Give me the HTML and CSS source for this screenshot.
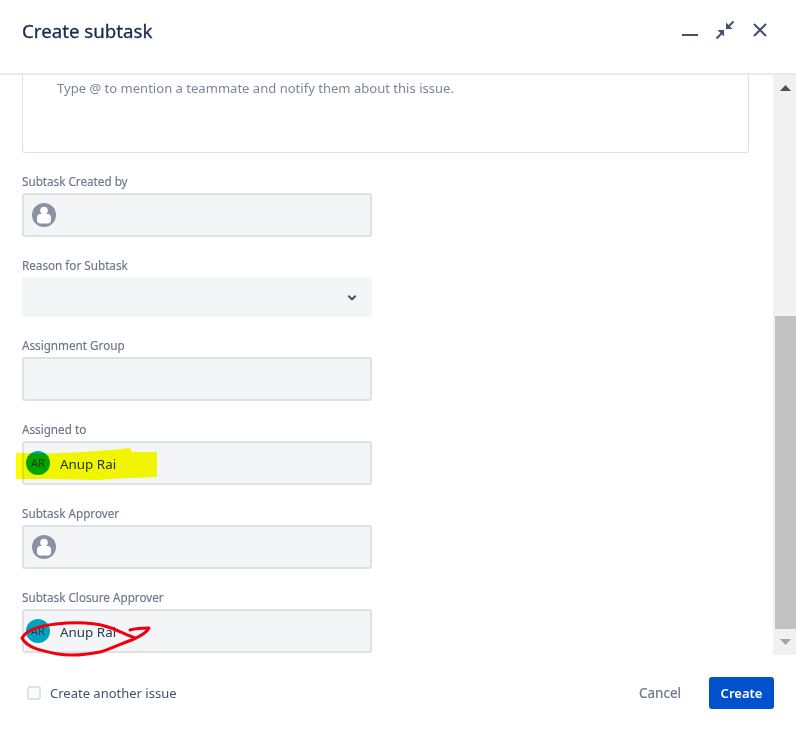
FILE: index.html
```html
<!DOCTYPE html>
<html lang="en">
<head>
<meta charset="utf-8">
<title>Create subtask</title>
<link rel="stylesheet" href="styles.css">
</head>
<body>
<div class="dialog">
  <header class="head">
    <h1 class="title">Create subtask</h1>
    <div class="head-icons">
      <svg class="hicon" width="24" height="24" viewBox="0 0 24 24"><rect x="3" y="16" width="16" height="2" fill="#42526e"/></svg>
      <svg class="hicon" width="24" height="24" viewBox="0 0 24 24"><path d="M4.500 20.500L10 15M15.500 9.500L21.500 3.500" fill="none" stroke="#42526e" stroke-width="2"/><path d="M12 12v6.500L5.500 12zM14 11V4.500L20.500 11z" fill="#42526e"/></svg>
      <svg class="hicon" width="24" height="24" viewBox="0 0 24 24"><path d="M9 6l12 12M21 6L9 18" fill="none" stroke="#42526e" stroke-width="2"/></svg>
    </div>
  </header>
  <div class="middle">
    <main class="body">
      <div class="editor">Type @ to mention a teammate and notify them about this issue.</div>
      <div class="field">
        <div class="label">Subtask Created by</div>
        <div class="box">
          <svg class="avatar" width="24" height="24" viewBox="0 0 24 24"><circle cx="12" cy="12" r="12" fill="#8993a4"/><circle cx="12" cy="7.500" r="3.800" fill="#fff"/><path d="M5 14.500a3.500 3.500 0 0 1 3.500-3.500h7a3.500 3.500 0 0 1 3.500 3.500V17a3.500 3.500 0 0 1-3.500 3.500h-7A3.500 3.500 0 0 1 5 17z" fill="#fff"/></svg>
        </div>
      </div>
      <div class="field">
        <div class="label">Reason for Subtask</div>
        <div class="select">
          <svg width="24" height="24" viewBox="0 0 24 24"><path d="M8.300 10.800L12 14.300l3.700-3.500" fill="none" stroke="#42526e" stroke-width="2"/></svg>
        </div>
      </div>
      <div class="field">
        <div class="label">Assignment Group</div>
        <div class="box"></div>
      </div>
      <div class="field">
        <div class="label">Assigned to</div>
        <div class="box">
          <span class="initials">AR</span><span class="name">Anup Rai</span>
        </div>
      </div>
      <div class="field">
        <div class="label">Subtask Approver</div>
        <div class="box">
          <svg class="avatar" width="24" height="24" viewBox="0 0 24 24"><circle cx="12" cy="12" r="12" fill="#8993a4"/><circle cx="12" cy="7.500" r="3.800" fill="#fff"/><path d="M5 14.500a3.500 3.500 0 0 1 3.500-3.500h7a3.500 3.500 0 0 1 3.500 3.500V17a3.500 3.500 0 0 1-3.500 3.500h-7A3.500 3.500 0 0 1 5 17z" fill="#fff"/></svg>
        </div>
      </div>
      <div class="field">
        <div class="label">Subtask Closure Approver</div>
        <div class="box">
          <span class="initials">AR</span><span class="name">Anup Rai</span>
        </div>
      </div>
    </main>
    <div class="scrollbar">
      <svg class="arrow" width="23" height="17" viewBox="0 0 23 17"><path d="M7 16h11L12.500 10z" fill="#505050"/></svg>
      <div class="track"><div class="thumb"></div></div>
      <svg class="arrow" width="23" height="26" viewBox="0 0 23 26"><path d="M7 10h11l-5.500 6z" fill="#a3a3a3"/></svg>
    </div>
  </div>
  <footer class="foot">
    <label class="check"><span class="checkbox"></span>Create another issue</label>
    <div class="actions">
      <span class="cancel">Cancel</span>
      <span class="create">Create</span>
    </div>
  </footer>
  <svg class="marks" width="796" height="730" viewBox="0 0 796 730">
    <path class="yellow" d="M16 453L50 453.500L83 452L110 450L130 448L132 452L157 452L157 477L128 478L97 480L50 479L16 479z"/>
    <path class="red" d="M130 630C137 628 143 628 149 628C146 634 138 637 132 640C120 644 110 649 100 652C85 655 70 656 58 654C42 651 27 648 22 638C26 631 38 626 56 624C75 622 95 623 108 627C117 630 125 634 135 638"/>
  </svg>
</div>
</body>
</html>
```
FILE: styles.css
```css
* { box-sizing: border-box; }
html, body { margin: 0; padding: 0; background: #fff; }
body { font-family: "Noto Sans", "Open Sans", sans-serif; color: #172b4d; }
.dialog { position: relative; width: 796px; height: 730px; overflow: hidden; display: flex; flex-direction: column; }
.head { height: 75px; flex: none; padding: 0 27px 0 22px; display: flex; align-items: center; justify-content: space-between; border-bottom: 2px solid #e9eaee; }
.title { margin: 0 0 12px; font-size: 18.700px; line-height: 28px; font-weight: 400; color: #172b4d; -webkit-text-stroke: 0.3px #172b4d; }
.head-icons { display: flex; gap: 9px; margin-bottom: 14px; }
.hicon { display: block; }
.middle { display: flex; height: 580px; flex: none; }
.body { width: 773px; flex: none; padding: 0 0 0 22px; overflow: hidden; }
.editor { width: 727px; height: 78px; border: 1px solid #dfe1e6; border-top: 0; border-radius: 0 0 3px 3px; padding: 4px 0 0 34px; font-size: 13.050px; line-height: 18px; color: #7a869a; }
.field { margin-top: 20px; }
.label { font-size: 11.700px; line-height: 16px; height: 20px; color: #6b778c; -webkit-text-stroke: 0.15px #6b778c; }
.box { width: 350px; height: 44px; background: #f4f5f7; border: 2px solid #dfe1e6; border-radius: 3px; display: flex; align-items: center; padding-left: 8px; }
.select { width: 350px; height: 40px; background: #f4f5f7; border-radius: 3px; display: flex; align-items: center; justify-content: flex-end; padding-right: 8px; }
.avatar { display: block; flex: none; }
.initials { width: 24px; height: 24px; flex: none; margin-left: -6px; border-radius: 50%; background: #00a3bf; color: #253858; font-size: 11px; line-height: 24px; text-align: center; }
.name { margin: 1px 0 0 10px; font-size: 13.400px; line-height: 20px; color: #253858; }
.scrollbar { width: 23px; flex: none; background: #f1f1f1; display: flex; flex-direction: column; }
.arrow { display: block; flex: none; }
.track { flex: 1; display: flex; flex-direction: column; justify-content: flex-end; }
.thumb { height: 313px; margin-left: 2px; background: #c1c1c1; }
.foot { flex: 1; display: flex; align-items: center; justify-content: space-between; padding: 0 22px 0 27px; }
.check { display: flex; align-items: center; gap: 9px; font-size: 13px; color: #42526e; }
.checkbox { width: 14px; height: 14px; border: 2px solid #dfe1e6; border-radius: 3px; background: #fafbfc; }
.actions { display: flex; align-items: center; gap: 28px; }
.cancel { font-size: 13.500px; color: #6b778c; -webkit-text-stroke: 0.2px #6b778c; }
.create { width: 65px; height: 32px; background: #0052cc; color: #fff; border-radius: 3px; font-size: 13px; font-weight: 600; line-height: 32px; text-align: center; }
.marks { position: absolute; left: 0; top: 0; pointer-events: none; }
.yellow { fill: #fcff00; mix-blend-mode: multiply; }
.red { fill: none; stroke: #f0000f; stroke-width: 3; stroke-linecap: round; stroke-linejoin: round; }
```
